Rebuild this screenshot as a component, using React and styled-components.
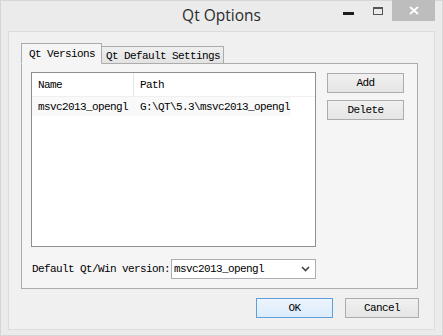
import React from 'react';
import styled, { createGlobalStyle } from 'styled-components';

const GlobalStyle = createGlobalStyle`
  html, body { margin: 0; padding: 0; background: #ebebeb; }
  * { box-sizing: border-box; }
`;

const mono = `"Liberation Mono", "DejaVu Sans Mono", monospace`;

const Window = styled.div`
  width: 443px;
  height: 336px;
  background: #ebebeb;
  border: 1px solid #d6d6d6;
  display: flex;
  flex-direction: column;
  font-family: ${mono};
  font-size: 11px;
  letter-spacing: -0.6px;
  color: #000;
`;

const TitleBar = styled.div`
  position: relative;
  height: 30px;
  flex: none;
  display: flex;
  align-items: center;
  justify-content: center;
`;

const Title = styled.div`
  font-family: "Open Sans", "Noto Sans", sans-serif;
  font-size: 15.5px;
  letter-spacing: 0;
  color: #2b2b2b;
  margin-top: -2px;
`;

const Controls = styled.div`
  position: absolute;
  top: -1px;
  right: 7px;
  display: flex;
  align-items: stretch;
  height: 21px;
`;

const CtrlButton = styled.div`
  width: ${({ wide }) => (wide ? 43 : 27)}px;
  display: flex;
  align-items: center;
  justify-content: center;
  background: ${({ close }) => (close ? '#bdbdbd' : 'transparent')};
`;

const MinBar = styled.div`
  width: 11px;
  height: 3px;
  background: #1c1c1c;
  margin: 6px 6px 0 0;
`;

const RestoreBox = styled.div`
  width: 10px;
  height: 8px;
  border: 1px solid #555;
  border-top-width: 2px;
  margin-right: 2px;
`;

const Client = styled.div`
  flex: 1;
  margin: 0 7px 6px 7px;
  background: #f0f0f0;
  border: 1px solid #dcdcdc;
  display: flex;
  flex-direction: column;
  padding: 10px 15px 11px 12px;
`;

const TabBar = styled.div`
  display: flex;
  align-items: flex-end;
  height: 21px;
  position: relative;
  z-index: 1;
`;

const Tab = styled.div`
  height: ${({ active }) => (active ? 21 : 18)}px;
  padding: ${({ active }) => (active ? '0 6px 0 7px' : '1px 3px 0 4px')};
  display: flex;
  align-items: center;
  white-space: nowrap;
  border: 1px solid #acacac;
  border-bottom: ${({ active }) => (active ? '1px solid #f5f5f5' : '1px solid #acacac')};
  border-left: ${({ active }) => (active ? '1px solid #acacac' : 'none')};
  background: ${({ active }) => (active ? '#f5f5f5' : 'linear-gradient(#efefef, #e3e3e3)')};
  margin-bottom: -1px;
`;

const Pane = styled.div`
  width: 397px;
  height: 226px;
  border: 1px solid #acacac;
  background: #f5f5f5;
  padding: 8px 13px 10px 9px;
  display: flex;
  flex-direction: column;
`;

const TopRow = styled.div`
  display: flex;
  gap: 11px;
`;

const List = styled.div`
  width: 285px;
  height: 175px;
  border: 1px solid #8e8f93;
  background: #fff;
  display: flex;
  flex-direction: column;
`;

const HeaderRow = styled.div`
  display: flex;
  height: 24px;
  align-items: center;
  border-bottom: 1px solid #f0f0f0;
`;

const Row = styled.div`
  display: flex;
  height: 19px;
  align-items: center;
  background: ${({ faint }) => (faint ? '#f9f9f9' : 'transparent')};
  width: 259px;
`;

const Cell = styled.div`
  width: ${({ w }) => w}px;
  padding-left: 6px;
  white-space: nowrap;
  align-self: stretch;
  display: flex;
  align-items: center;
  border-right: ${({ sep }) => (sep ? '1px solid #e5e5e5' : 'none')};
`;

const SideButtons = styled.div`
  display: flex;
  flex-direction: column;
  gap: 7px;
  padding-top: 1px;
`;

const Button = styled.div`
  width: ${({ w }) => w || 77}px;
  height: 20px;
  display: flex;
  align-items: center;
  justify-content: center;
  border: 1px solid ${({ primary }) => (primary ? '#5fa0db' : '#acacac')};
  background: ${({ primary }) =>
    primary ? 'linear-gradient(#ecf4fc, #dcecfc)' : 'linear-gradient(#f0f0f0, #e5e5e5)'};
`;

const BottomRow = styled.div`
  display: flex;
  align-items: center;
  margin-top: 12px;
  gap: 1px;
`;

const Label = styled.div`
  padding-left: 1px;
  white-space: nowrap;
`;

const Combo = styled.div`
  width: 145px;
  height: 20px;
  border: 1px solid #abadb3;
  background: #fff;
  display: flex;
  align-items: center;
  justify-content: space-between;
  padding: 0 5px 0 2px;
`;

const Footer = styled.div`
  display: flex;
  justify-content: flex-end;
  gap: 12px;
  margin-top: 9px;
`;

const Chevron = () => (
  <svg width="9" height="6" viewBox="0 0 9 6">
    <path d="M1 1 L4.5 4.5 L8 1" fill="none" stroke="#444" strokeWidth="1.6" />
  </svg>
);

const CloseX = () => (
  <svg width="10" height="9" viewBox="0 0 10 9">
    <path d="M1 1 L9 8 M9 1 L1 8" stroke="#fff" strokeWidth="1.8" />
  </svg>
);

const App = () => (
  <>
    <GlobalStyle />
    <Window>
      <TitleBar>
        <Title>Qt Options</Title>
        <Controls>
          <CtrlButton><MinBar /></CtrlButton>
          <CtrlButton><RestoreBox /></CtrlButton>
          <CtrlButton wide close><CloseX /></CtrlButton>
        </Controls>
      </TitleBar>
      <Client>
        <TabBar>
          <Tab active>Qt Versions</Tab>
          <Tab>Qt Default Settings</Tab>
        </TabBar>
        <Pane>
          <TopRow>
            <List>
              <HeaderRow>
                <Cell w={102} sep>Name</Cell>
                <Cell w={180}>Path</Cell>
              </HeaderRow>
              <Row faint>
                <Cell w={102}>msvc2013_opengl</Cell>
                <Cell w={157}>G:\QT\5.3\msvc2013_opengl</Cell>
              </Row>
            </List>
            <SideButtons>
              <Button>Add</Button>
              <Button>Delete</Button>
            </SideButtons>
          </TopRow>
          <BottomRow>
            <Label>Default Qt/Win version:</Label>
            <Combo>
              <span>msvc2013_opengl</span>
              <Chevron />
            </Combo>
          </BottomRow>
        </Pane>
        <Footer>
          <Button primary>OK</Button>
          <Button w={74}>Cancel</Button>
        </Footer>
      </Client>
    </Window>
  </>
);

export default App;
